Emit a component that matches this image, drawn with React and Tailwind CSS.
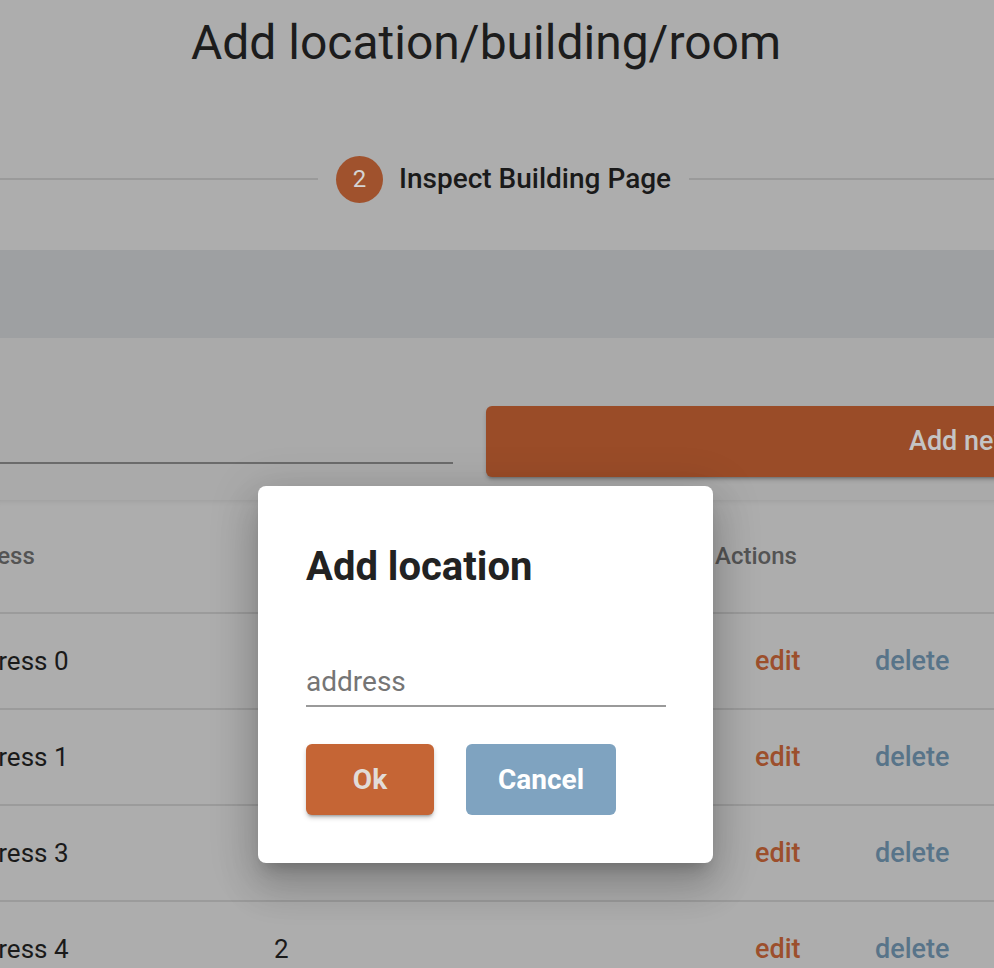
import React from 'react'

const rows = [
  { address: 'Address 0', count: '' },
  { address: 'Address 1', count: '' },
  { address: 'Address 3', count: '' },
  { address: 'Address 4', count: '2' },
]

export default function App() {
  return (
    <div className="relative w-[994px] h-[968px] overflow-hidden bg-[#adadad] font-['Roboto','Liberation_Sans',sans-serif]">
      {/* page title */}
      <div className="w-[972px] h-[86px] flex items-center justify-center">
        <h1 className="text-[48px] leading-[56px] font-normal text-[#1c1c1c] whitespace-nowrap">Add location/building/room</h1>
      </div>

      {/* stepper */}
      <div className="mt-[69px] h-[48px] flex items-center">
        <div className="w-[318px] shrink-0 h-[2px] bg-[#9a9a9a]" />
        <div className="ml-[18px] shrink-0 w-[47px] h-[47px] rounded-full bg-[#a0522d] flex items-center justify-center text-[24px] text-[#d4d4d4]">2</div>
        <span className="ml-[16px] shrink-0 text-[28px] font-medium text-[#1a1a1a] whitespace-nowrap">Inspect Building Page</span>
        <div className="ml-[18px] flex-1 h-[2px] bg-[#9a9a9a]" />
      </div>

      {/* band */}
      <div className="mt-[47px] h-[88px] bg-[#9ea0a2]" />

      {/* search + add */}
      <div className="h-[162px] bg-[#aaaaaa] pt-[68px] flex items-start">
        <div className="w-[453px] shrink-0 h-[58px] border-b-2 border-[#6b6b6b]" />
        <button className="ml-[33px] shrink-0 w-[1066px] h-[71px] rounded-[6px] bg-[#9a4c28] pl-[423px] text-left text-[27px] font-medium text-[#c4c4c4] whitespace-nowrap shadow-[0_3px_3px_-2px_rgba(0,0,0,0.25),0_3px_4px_0_rgba(0,0,0,0.16)]">
          Add new location
        </button>
      </div>

      {/* table */}
      <div className="bg-[#adadad] shadow-[inset_0_6px_6px_-6px_rgba(0,0,0,0.12)]">
        <div className="h-[112px] flex items-center text-[24px] font-medium text-[#545454]">
          <div className="ml-[-54px] w-[328px] shrink-0">Address</div>
          <div className="w-[441px] shrink-0">Rooms</div>
          <div>Actions</div>
        </div>
        {rows.map((r) => (
          <div key={r.address} className="h-[96px] border-t-2 border-[#9b9b9b] flex items-center text-[26px] text-[#1a1a1a]">
            <div className="ml-[-48px] w-[322px] shrink-0 whitespace-nowrap">{r.address}</div>
            <div className="w-[441px] shrink-0">{r.count}</div>
            <div className="flex items-center text-[27px] font-medium">
              <span className="ml-[40px] w-[120px] text-[#9c4f2c]">edit</span>
              <span className="text-[#587489]">delete</span>
            </div>
          </div>
        ))}
      </div>

      {/* dialog */}
      <div className="absolute left-[258px] top-[486px] w-[455px] h-[377px] rounded-[8px] bg-white pl-[48px] pr-[47px] pt-[57px] flex flex-col shadow-[0_11px_15px_-7px_rgba(0,0,0,0.2),0_24px_38px_3px_rgba(0,0,0,0.14),0_9px_46px_8px_rgba(0,0,0,0.12)]">
        <h2 className="text-[40px] leading-[48px] font-bold text-[#222222]">Add location</h2>
        <div className="mt-[68px] h-[48px] flex items-center border-b-2 border-[#9a9a9a] text-[28px] text-[#757575]">address</div>
        <div className="mt-[37px] flex gap-[32px]">
          <button className="w-[128px] h-[71px] rounded-[6px] bg-[#c56535] text-[28px] font-bold text-[#e2dcd8] shadow-[0_3px_3px_-2px_rgba(0,0,0,0.3),0_3px_5px_0_rgba(0,0,0,0.18)]">Ok</button>
          <button className="w-[150px] h-[71px] rounded-[6px] bg-[#7fa3c0] text-[28px] font-bold text-white">Cancel</button>
        </div>
      </div>
    </div>
  )
}
